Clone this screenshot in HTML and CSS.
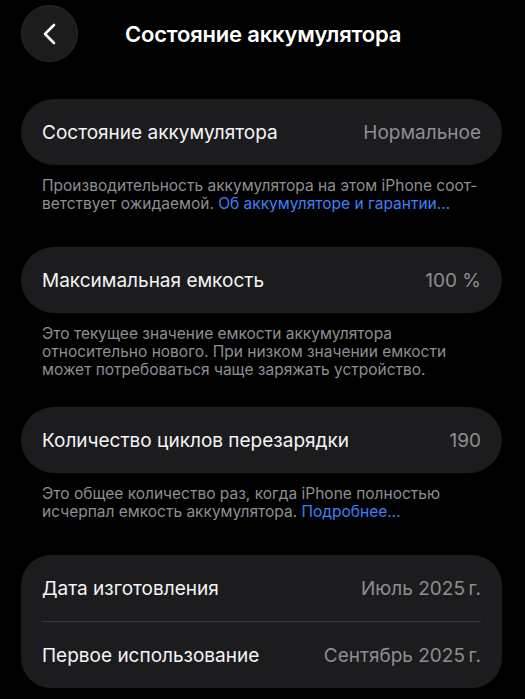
FILE: index.html
```html
<!DOCTYPE html>
<html lang="ru">
  <head>
    <meta charset="UTF-8" />
    <meta name="viewport" content="width=device-width, initial-scale=1.0" />
    <title>Состояние аккумулятора</title>
    <link rel="stylesheet" href="styles.css">
  </head>
  <body>
    <div class="header">
      <button class="back" aria-label="Назад">
        <svg width="16" height="22" viewBox="0 0 16 22">
          <path d="M12 2 L3 11 L12 20" fill="none" stroke="#fff" stroke-width="2.6" stroke-linecap="round" stroke-linejoin="round" />
        </svg>
      </button>
      <h1>Состояние аккумулятора</h1>
    </div>

    <div class="content">
      <div class="card">
        <div class="row">
          <span class="label">Состояние аккумулятора</span>
          <span class="value">Нормальное</span>
        </div>
      </div>
      <p class="note">
        Производительность аккумулятора на этом iPhone соот-<br>ветствует ожидаемой. <a href="#">Об аккумуляторе и гарантии…</a>
      </p>

      <div class="card">
        <div class="row">
          <span class="label">Максимальная емкость</span>
          <span class="value">100 %</span>
        </div>
      </div>
      <p class="note long">
        Это текущее значение емкости аккумулятора<br>относительно нового. При низком значении емкости<br>может потребоваться чаще заряжать устройство.
      </p>

      <div class="card">
        <div class="row">
          <span class="label">Количество циклов перезарядки</span>
          <span class="value">190</span>
        </div>
      </div>
      <p class="note">
        Это общее количество раз, когда iPhone полностью<br>исчерпал емкость аккумулятора. <a href="#">Подробнее…</a>
      </p>

      <div class="card group">
        <div class="row">
          <span class="label">Дата изготовления</span>
          <span class="value">Июль 2025&#8201;г.</span>
        </div>
        <div class="row">
          <span class="label">Первое использование</span>
          <span class="value">Сентябрь 2025&#8201;г.</span>
        </div>
      </div>
    </div>
  </body>
</html>
```

FILE: styles.css
```css
body {
  margin: 0;
  background: #000;
  color: #fff;
  font-family: Inter, "Noto Sans", sans-serif;
}

.header {
  display: flex;
  align-items: center;
  padding: 5px 0 0 21px;
}

.back {
  width: 57px;
  height: 57px;
  border-radius: 50%;
  background: #1c1c1e;
  border: 1px solid #2a2a2c;
  display: flex;
  align-items: center;
  justify-content: center;
  padding: 0;
  cursor: pointer;
}

.header h1 {
  margin: 0 0 0 47px;
  font-size: 22px;
  font-weight: 600;
  letter-spacing: -0.2px;
}

.content {
  padding: 37px 23px 0 21px;
}

.card {
  background: #1c1c1e;
  border-radius: 33px;
}

.card.group {
  border-radius: 30px;
}

.row {
  height: 66px;
  display: flex;
  align-items: center;
  justify-content: space-between;
  margin: 0 21px;
  font-size: 19px;
  color: #f5f5f7;
}

.group .row + .row {
  border-top: 1px solid #38383a;
}

.value {
  color: #8e8e93;
}

.note {
  margin: 12px 21px 34px;
  font-size: 15.5px;
  line-height: 18px;
  color: #8e8e93;
}

.note.long {
  margin-bottom: 28px;
}

.note a {
  color: #3b82f6;
  text-decoration: none;
}
```
